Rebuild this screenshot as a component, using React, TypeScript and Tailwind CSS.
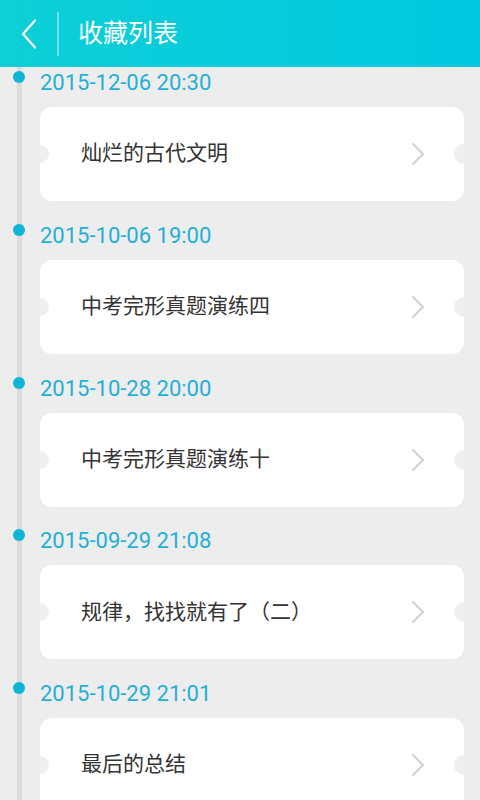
interface Favorite {
  time: string;
  title: string;
}

const favorites: Favorite[] = [
  { time: '2015-12-06 20:30', title: '灿烂的古代文明' },
  { time: '2015-10-06 19:00', title: '中考完形真题演练四' },
  { time: '2015-10-28 20:00', title: '中考完形真题演练十' },
  { time: '2015-09-29 21:08', title: '规律，找找就有了（二）' },
  { time: '2015-10-29 21:01', title: '最后的总结' },
];

const font = { fontFamily: 'Roboto, "Noto Sans CJK SC", sans-serif' };

function FavoriteItem({ time, title }: Favorite) {
  return (
    <div className="flex flex-col gap-[10px] pb-[18.75px]">
      <div className="flex h-[30px] items-center gap-[15px] pl-[13px]">
        <div className="h-3 w-3 self-start mt-[4px] rounded-full bg-[#0fb5d4]" />
        <span className="mt-[2px] text-[22px] leading-none text-[#1fb0d8]">{time}</span>
      </div>
      <div className="relative ml-[40px] mr-[16px] flex h-[94px] items-center overflow-hidden rounded-[12px] bg-white pl-[41px] pr-[39px]">
        <div className="absolute left-[-9px] top-[38px] h-[18px] w-[18px] rounded-full bg-[#efefef]" />
        <div className="absolute right-[-10px] top-[37px] h-5 w-5 rounded-full bg-[#efefef]" />
        <span className="flex-1 text-[21px] text-[#333333]">{title}</span>
        <svg width="14" height="24" viewBox="0 0 14 24">
          <path d="M2 2 L12 12 L2 22" fill="none" stroke="#d2d2d2" strokeWidth="2.2" strokeLinecap="round" strokeLinejoin="round" />
        </svg>
      </div>
    </div>
  );
}

export default function App() {
  return (
    <div className="relative h-[800px] w-[480px] overflow-hidden bg-[#ededed]" style={font}>
      <header className="flex h-[67px] items-center bg-gradient-to-r from-[#0dcfd6] to-[#00c8e0] pl-[21px]">
        <svg width="16" height="30" viewBox="0 0 16 30">
          <path d="M14 1.5 L2 15 L14 28.5" fill="none" stroke="white" strokeWidth="2.2" strokeLinecap="round" strokeLinejoin="round" />
        </svg>
        <div className="ml-[20px] h-[44px] w-[2px] bg-white/40" />
        <h1 className="ml-[19px] text-[25px] font-normal text-white">收藏列表</h1>
      </header>
      {/* timeline rail behind the dots */}
      <div className="absolute left-[17px] top-[67px] bottom-0 w-[5px] bg-[#dcdcdc]" />
      <div className="relative">
        {favorites.map((f, i) => (
          <FavoriteItem key={i} {...f} />
        ))}
      </div>
    </div>
  );
}
